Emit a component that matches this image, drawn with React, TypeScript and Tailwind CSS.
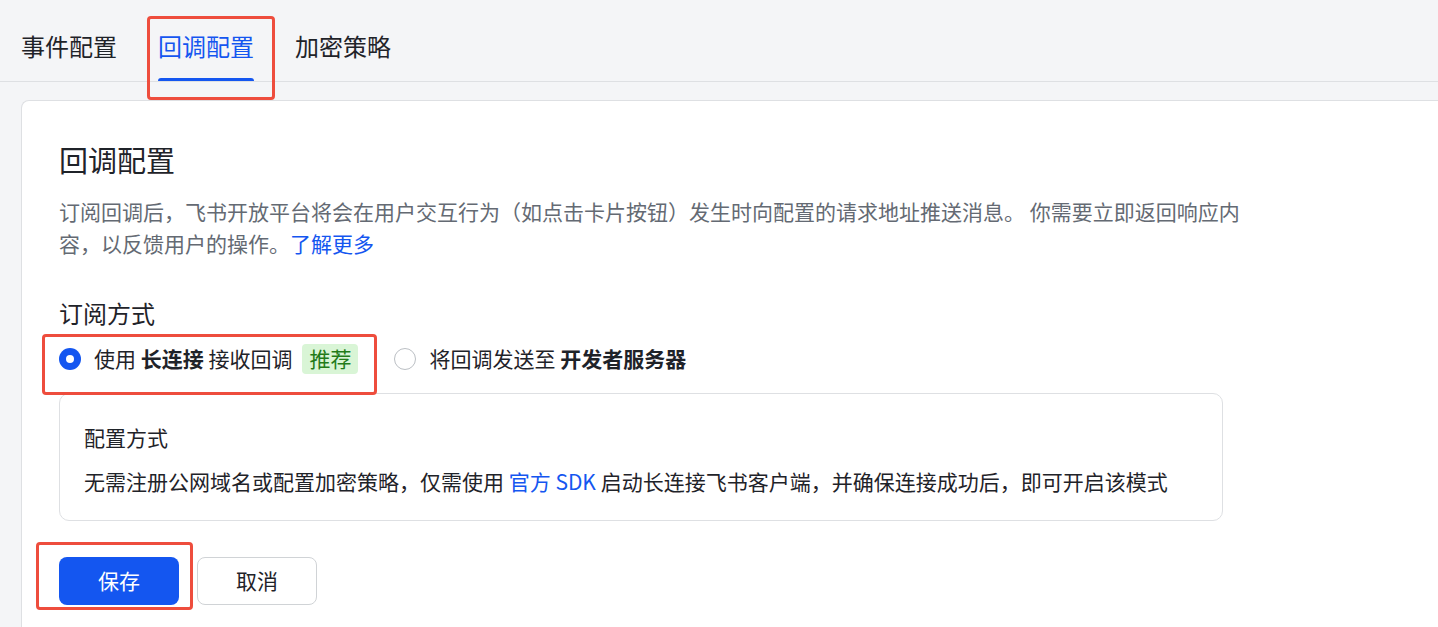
import React, { useState } from 'react'

const tabs = ['事件配置', '回调配置', '加密策略']

const Radio: React.FC<{ checked: boolean }> = ({ checked }) =>
  checked ? (
    <span className="flex h-[22px] w-[22px] shrink-0 items-center justify-center rounded-full bg-[#1456f0]">
      <span className="h-[8px] w-[8px] rounded-full bg-white" />
    </span>
  ) : (
    <span className="h-[22px] w-[22px] shrink-0 rounded-full border border-[#bbbfc4] bg-white" />
  )

export default function App() {
  const [active, setActive] = useState(1)
  const [mode, setMode] = useState<'ws' | 'server'>('ws')

  return (
    <div
      className="relative min-h-[627px] overflow-hidden bg-[#f4f5f7] text-[#1f2329]"
      style={{ fontFamily: '"Noto Sans CJK SC", "Noto Sans", sans-serif' }}
    >
      {/* tabs */}
      <div className="flex gap-[41px] border-b border-[#dee0e3] pl-[21px]">
        {tabs.map((t, i) => (
          <button
            key={t}
            onClick={() => setActive(i)}
            className="flex flex-col pt-[30px]"
          >
            <span
              className={
                'text-[24px] leading-[32px] ' +
                (active === i ? 'text-[#1456f0]' : 'text-[#1f2329]')
              }
            >
              {t}
            </span>
            <span
              className={
                'mt-[16px] h-[3px] rounded-t-[3px] ' +
                (active === i ? 'bg-[#1456f0]' : 'bg-transparent')
              }
            />
          </button>
        ))}
      </div>

      {/* card */}
      <div className="ml-[21px] mt-[18px] min-h-[527px] rounded-tl-[8px] border-l border-t border-[#dee0e3] bg-white pl-[37px] pt-[38px]">
        <h1 className="text-[29px] leading-[40px] font-normal">回调配置</h1>
        <p className="mt-[16px] w-[1192px] text-[21px] leading-[32px] text-[#646a73]">
          <span>订阅回调后，飞书开放平台将会在用户交互行为（如点击卡片按钮）发生时向配置的请求地址推送消息。 你需要立即返回响应内容，以反馈用户的操作。</span>
          <a className="text-[#1456f0]">了解更多</a>
        </p>

        <div className="mt-[38px] text-[24px] leading-[32px]">订阅方式</div>

        <div className="mt-[14px] flex h-[32px] items-center text-[21px]">
          <label className="flex cursor-pointer items-center" onClick={() => setMode('ws')}>
            <Radio checked={mode === 'ws'} />
            <span className="ml-[13px] whitespace-pre">
              使用 <b className="font-bold">长连接</b> 接收回调
            </span>
            <span className="ml-[10px] flex h-[30px] items-center rounded-[4px] bg-[#d9f5d6] px-[7px] text-[#237b19]">
              推荐
            </span>
          </label>
          <label className="ml-[36px] flex cursor-pointer items-center" onClick={() => setMode('server')}>
            <Radio checked={mode === 'server'} />
            <span className="ml-[13px] whitespace-pre">
              将回调发送至 <b className="font-bold">开发者服务器</b>
            </span>
          </label>
        </div>

        <div className="mt-[18px] w-[1164px] rounded-[10px] border border-[#dee0e3] pb-[23px] pl-[24px] pt-[27px] text-[21px] leading-[32px]">
          <div>配置方式</div>
          <div className="mt-[12px]">
            无需注册公网域名或配置加密策略，仅需使用 <a className="text-[#1456f0]">官方 SDK</a> 启动长连接飞书客户端，并确保连接成功后，即可开启该模式
          </div>
        </div>

        <div className="mt-[36px] flex gap-[18px]">
          <button className="h-[48px] w-[120px] rounded-[8px] bg-[#1456f0] text-[21px] text-white">
            保存
          </button>
          <button className="h-[48px] w-[120px] rounded-[8px] border border-[#d0d3d6] bg-white text-[21px] text-[#1f2329]">
            取消
          </button>
        </div>
      </div>

      {/* annotation boxes */}
      <div className="pointer-events-none absolute left-[147px] top-[16px] h-[84px] w-[128px] rounded-[4px] border-[3px] border-[#ee4d3d]" />
      <div className="pointer-events-none absolute left-[42px] top-[334px] h-[61px] w-[335px] rounded-[4px] border-[3px] border-[#ee4d3d]" />
      <div className="pointer-events-none absolute left-[36px] top-[542px] h-[68px] w-[157px] rounded-[4px] border-[3px] border-[#ee4d3d]" />
    </div>
  )
}
